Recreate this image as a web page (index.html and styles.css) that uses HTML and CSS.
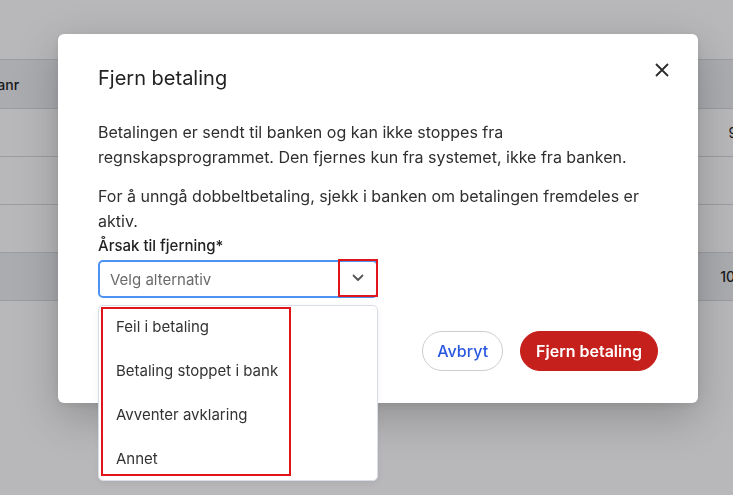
FILE: index.html
```html
<!DOCTYPE html>
<html lang="no">
<head>
<meta charset="utf-8">
<title>Fjern betaling</title>
<link rel="stylesheet" href="styles.css">
</head>
<body>
<div class="page">
  <table class="grid">
    <thead>
      <tr><th class="c1">Fakturanr</th><th>Leverandør</th><th>Forfall</th><th class="num"></th></tr>
    </thead>
    <tbody>
      <tr><td class="c1"></td><td>Kontorrekvisita AS</td><td>12.05.2024</td><td class="num">9 375,00</td></tr>
      <tr><td class="c1"></td><td>Renhold Nord</td><td>14.05.2024</td><td class="num">850,00</td></tr>
      <tr><td class="c1"></td><td>Telenor</td><td>15.05.2024</td><td class="num">420,00</td></tr>
      <tr class="sum"><td class="c1"></td><td></td><td></td><td class="num">10 645,00</td></tr>
    </tbody>
  </table>
</div>

<div class="overlay"></div>

<div class="modal" role="dialog" aria-labelledby="dlg-title">
  <div class="modal-head">
    <h2 id="dlg-title">Fjern betaling</h2>
    <button class="close" aria-label="Lukk">
      <svg width="14" height="14" viewBox="0 0 14 14"><path d="M1 1L13 13M13 1L1 13" stroke="#2b2b2b" stroke-width="1.8" fill="none"/></svg>
    </button>
  </div>
  <p class="text first">Betalingen er sendt til banken og kan ikke stoppes fra regnskapsprogrammet. Den fjernes kun fra systemet, ikke fra banken.</p>
  <p class="text second">For å unngå dobbeltbetaling, sjekk i banken om betalingen fremdeles er aktiv.</p>
  <label class="label">Årsak til fjerning*</label>
  <div class="select-wrap">
    <div class="select">
      <span class="placeholder">Velg alternativ</span>
      <span class="chev">
        <svg width="12" height="8" viewBox="0 0 12 8"><path d="M1.5 1.5L6 6L10.5 1.5" stroke="#555" stroke-width="1.8" fill="none" stroke-linecap="round" stroke-linejoin="round"/></svg>
      </span>
    </div>
    <div class="menu">
      <ul class="options">
        <li>Feil i betaling</li>
        <li>Betaling stoppet i bank</li>
        <li>Avventer avklaring</li>
        <li>Annet</li>
      </ul>
    </div>
  </div>
  <div class="actions">
    <button class="btn ghost">Avbryt</button>
    <button class="btn danger">Fjern betaling</button>
  </div>
</div>
</body>
</html>
```

FILE: styles.css
```css
html, body {
  margin: 0;
  padding: 0;
  overflow: hidden;
  height: 100%;
}
body {
  background: #ffffff;
  font-family: Inter, "Noto Sans", sans-serif;
  color: #222;
}
.page {
  padding-top: 59px;
}
.grid {
  margin-left: -61px;
  width: 864px;
  border-collapse: collapse;
  font-size: 14px;
  color: #1f1f1f;
}
.grid th, .grid td {
  height: 47px;
  padding: 0 16px;
  border-top: 1px solid #d6d9de;
  text-align: left;
  white-space: nowrap;
}
.grid th {
  background: #eceef1;
  font-weight: 500;
  height: 48px;
}
.grid .c1 { width: 100px; }
.grid .num { text-align: right; width: 90px; }
.grid tr.sum td {
  background: #eceef1;
  font-weight: 500;
  border-bottom: 1px solid #d6d9de;
}
.overlay {
  position: fixed;
  inset: 0;
  background: rgba(10, 12, 16, 0.29);
}
.modal {
  position: absolute;
  left: 58px;
  top: 34px;
  width: 640px;
  box-sizing: border-box;
  padding: 30px 40px 32px;
  background: #fff;
  border-radius: 6px;
  box-shadow: 0 14px 44px rgba(0, 0, 0, 0.22), 0 2px 8px rgba(0, 0, 0, 0.08);
}
.modal-head {
  display: flex;
  justify-content: space-between;
  align-items: flex-start;
}
.modal-head h2 {
  margin: 0;
  font-size: 20px;
  font-weight: 400;
  line-height: 28px;
  color: #222;
}
.close {
  width: 24px;
  height: 24px;
  margin: -6px -16px 0 0;
  padding: 0;
  border: 0;
  background: none;
  display: flex;
  align-items: center;
  justify-content: center;
}
.text {
  margin: 0;
  font-size: 16px;
  line-height: 24.5px;
  color: #2f2f2f;
}
.text.first { margin-top: 28px; }
.text.second { margin-top: 15px; }
.label {
  display: block;
  margin-top: 2px;
  font-size: 15px;
  line-height: 22px;
  font-weight: 500;
  color: #222;
}
.select-wrap {
  position: relative;
  width: 280px;
  margin-top: 3px;
}
.select {
  box-sizing: border-box;
  height: 38px;
  border: 2px solid #4f93f2;
  border-radius: 5px;
  display: flex;
  align-items: stretch;
  padding-left: 10px;
}
.placeholder {
  flex: 1;
  display: flex;
  align-items: center;
  font-size: 15px;
  color: #6a6a6a;
}
.chev {
  box-sizing: border-box;
  width: 40px;
  margin: -3px -2px -1px 0;
  border: 2px solid #e0141b;
  display: flex;
  align-items: center;
  justify-content: center;
}
.menu {
  position: absolute;
  top: calc(100% + 7px);
  left: 0;
  right: 0;
  box-sizing: border-box;
  background: #fff;
  border: 1px solid #d9dee6;
  border-radius: 5px;
  padding: 1px 0 4px 2px;
  box-shadow: 0 2px 6px rgba(0, 0, 0, 0.06);
  z-index: 2;
}
.options {
  list-style: none;
  margin: 0;
  padding: 0;
  width: 190px;
  box-sizing: border-box;
  border: 2px solid #e0141b;
}
.options li {
  padding: 8px 0 16px 13px;
  font-size: 15px;
  line-height: 20px;
  color: #333;
}
.options li:last-child {
  padding-bottom: 5px;
}
.actions {
  display: flex;
  justify-content: flex-end;
  gap: 17px;
  margin-top: 33px;
}
.btn {
  height: 40px;
  border-radius: 20px;
  font-family: Inter, "Noto Sans", sans-serif;
  font-size: 16px;
  cursor: pointer;
}
.btn.ghost {
  padding: 0 14px;
  background: #fff;
  border: 1px solid #cdcdcd;
  color: #2a59e0;
  font-weight: 500;
}
.btn.danger {
  padding: 0 15px;
  background: #c6201c;
  border: 1px solid #c6201c;
  color: #fff;
  font-weight: 600;
}
```
